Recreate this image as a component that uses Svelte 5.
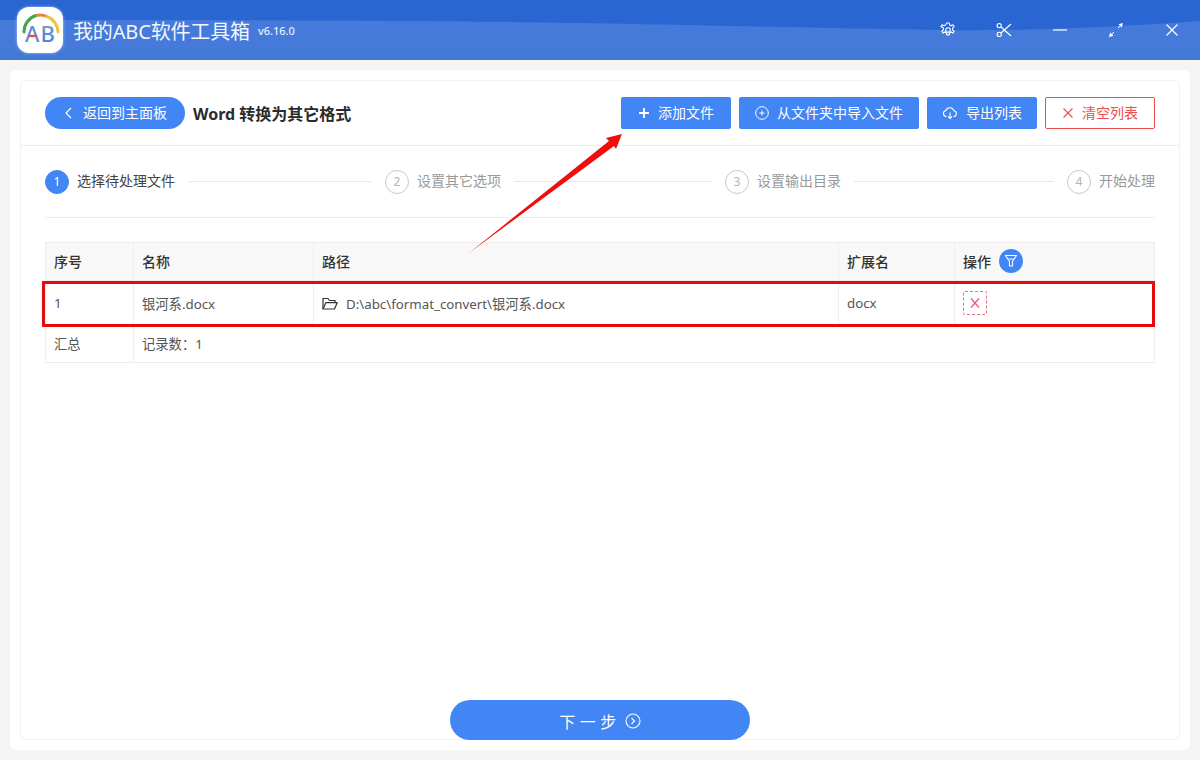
<script>
  const steps = [
    { n: 1, label: '选择待处理文件', active: true },
    { n: 2, label: '设置其它选项' },
    { n: 3, label: '设置输出目录' },
    { n: 4, label: '开始处理' }
  ];
</script>

<div class="app">
  <header class="top">
    <svg class="wave" viewBox="0 0 1200 60" preserveAspectRatio="none" aria-hidden="true">
      <rect width="1200" height="60" fill="#2a66d1" />
      <path d="M0 20 C150 20 300 20 420 21 C640 23 800 28 940 30 C1030 31 1120 27 1200 21 L1200 60 L0 60 Z" fill="#457ada" />
      <rect y="50" width="1200" height="10" fill="#4279d6" />
    </svg>
    <div class="logo">
      <svg viewBox="0 0 46 46" width="46" height="46" aria-hidden="true">
        <defs>
          <linearGradient id="bfill" x1="0" y1="0" x2="0" y2="1">
            <stop offset="0" stop-color="#e3b84a" />
            <stop offset="0.4" stop-color="#5a8fe0" />
            <stop offset="1" stop-color="#4a7fe0" />
          </linearGradient>
        </defs>
        <path d="M7 25 A17 17 0 0 1 19 8.500" fill="none" stroke="#3fa652" stroke-width="3" stroke-linecap="round" />
        <path d="M19 8.500 A17 17 0 0 1 30 9.500" fill="none" stroke="#d98a3a" stroke-width="3" />
        <path d="M30 9.500 A17 17 0 0 1 41 25" fill="none" stroke="#efc23a" stroke-width="3" stroke-linecap="round" />
        <text x="8" y="35" class="logo-a">A</text>
        <path d="M11.500 29h8" stroke="#e8524a" stroke-width="2.400" />
        <text x="23.500" y="35" class="logo-b">B</text>
      </svg>
    </div>
    <span class="app-name">我的ABC软件工具箱</span>
    <span class="version">v6.16.0</span>
    <div class="win-icons">
      <svg viewBox="0 0 16 16" width="16" height="16" aria-hidden="true"><path d="M6.800 1h2.400l.4 2 1.500.7 1.800-1 1.200 1.900-1.500 1.300v1.900l1.500 1.300-1.200 2-1.800-1-1.500.8-.4 2H6.800l-.4-2-1.500-.8-1.800 1-1.200-2 1.500-1.300V6L.9 4.600l1.200-1.900 1.800 1 1.500-.7z" fill="none" stroke="#fff" stroke-width="1.100" stroke-linejoin="round" /><circle cx="8" cy="8" r="2.300" fill="none" stroke="#fff" stroke-width="1.100" /></svg>
      <svg viewBox="0 0 16 16" width="16" height="16" aria-hidden="true"><circle cx="3.200" cy="3.600" r="2.100" fill="none" stroke="#fff" stroke-width="1.100" /><circle cx="3.200" cy="12.400" r="2.100" fill="none" stroke="#fff" stroke-width="1.100" /><path d="M5 5l10 9M5 11L15 2" stroke="#fff" stroke-width="1.100" fill="none" /></svg>
      <svg viewBox="0 0 16 16" width="16" height="16" aria-hidden="true"><path d="M1 8h14" stroke="#cfe2ff" stroke-width="1.600" /></svg>
      <svg viewBox="0 0 16 16" width="16" height="16" aria-hidden="true"><path d="M15 1l-4.600 1.200 3.400 3.400zM1 15l4.600-1.200-3.400-3.400z" fill="#fff" /><path d="M12 4l-2 2M4 12l2-2" stroke="#fff" stroke-width="1" /></svg>
      <svg viewBox="0 0 16 16" width="16" height="16" aria-hidden="true"><path d="M2.500 2.500l11 11M13.500 2.500l-11 11" stroke="#fff" stroke-width="1.200" /></svg>
    </div>
  </header>

  <main class="shell">
    <section class="card">
      <div class="toolbar">
        <button class="back">
          <svg viewBox="0 0 12 12" width="12" height="12" aria-hidden="true"><path d="M8 1L3 6l5 5" fill="none" stroke="#fff" stroke-width="1.200" /></svg>
          <span class="lbl">返回到主面板</span>
        </button>
        <h1>Word 转换为其它格式</h1>
        <div class="actions">
          <button class="btn add">
            <svg viewBox="0 0 12 12" width="12" height="12" aria-hidden="true"><path d="M6 1v10M1 6h10" stroke="#fff" stroke-width="1.800" /></svg>
            <span class="lbl">添加文件</span>
          </button>
          <button class="btn import">
            <svg viewBox="0 0 14 14" width="14" height="14" aria-hidden="true"><circle cx="7" cy="7" r="6.300" fill="none" stroke="#fff" stroke-width="1" /><path d="M7 4.500v5M4.500 7h5" stroke="#fff" stroke-width="1" /></svg>
            <span class="lbl">从文件夹中导入文件</span>
          </button>
          <button class="btn export">
            <svg viewBox="0 0 16 14" width="16" height="14" aria-hidden="true"><path d="M4.500 10.500H4A3 3 0 0 1 3.800 4.600 4.300 4.300 0 0 1 12 4.800a2.900 2.900 0 0 1 0 5.700h-.5" fill="none" stroke="#fff" stroke-width="1.100" /><path d="M8 6.500v6M6 10.500l2 2 2-2" fill="none" stroke="#fff" stroke-width="1.100" /></svg>
            <span class="lbl">导出列表</span>
          </button>
          <button class="btn clear">
            <svg viewBox="0 0 12 12" width="12" height="12" aria-hidden="true"><path d="M1.500 1.500l9 9M10.500 1.500l-9 9" stroke="#ee4d4d" stroke-width="1.100" /></svg>
            <span class="lbl">清空列表</span>
          </button>
        </div>
      </div>

      <div class="content">
        <ol class="steps">
          {#each steps as s, i}
            {#if i > 0}<li class="line" aria-hidden="true"></li>{/if}
            <li class="step" class:active={s.active}>
              <span class="num">{s.n}</span>
              <span class="step-label">{s.label}</span>
            </li>
          {/each}
        </ol>

        <table>
          <colgroup>
            <col style="width:88px" /><col style="width:180px" /><col style="width:525px" /><col style="width:116px" /><col />
          </colgroup>
          <thead>
            <tr>
              <th>序号</th><th>名称</th><th>路径</th><th>扩展名</th>
              <th>
                <span class="op">操作
                  <span class="filter">
                    <svg viewBox="0 0 14 14" width="14" height="14" aria-hidden="true"><path d="M1.500 1.500h11L8.500 7.500v4.500h-3V7.500z" fill="none" stroke="#fff" stroke-width="1.100" stroke-linejoin="round" /><path d="M4.500 5h5" stroke="#fff" stroke-width="1" /></svg>
                  </span>
                </span>
              </th>
            </tr>
          </thead>
          <tbody>
            <tr class="row">
              <td>1</td>
              <td>银河系.docx</td>
              <td>
                <span class="path">
                  <svg viewBox="0 0 16 13" width="16" height="13" aria-hidden="true"><path d="M1 12V1.500h5l1.500 2H13v2.200" fill="none" stroke="#333" stroke-width="1.200" /><path d="M1 12l2.800-6.300H15.200L12.500 12z" fill="none" stroke="#333" stroke-width="1.200" stroke-linejoin="round" /></svg>
                  D:\abc\format_convert\银河系.docx
                </span>
              </td>
              <td>docx</td>
              <td>
                <span class="del">
                  <svg viewBox="0 0 12 12" width="12" height="12" aria-hidden="true"><path d="M2 1.500l8 9M10 1.500l-8 9" stroke="#e8596e" stroke-width="1.200" /></svg>
                </span>
              </td>
            </tr>
            <tr class="sum">
              <td>汇总</td>
              <td colspan="4">记录数：1</td>
            </tr>
          </tbody>
        </table>

        <div class="highlight" aria-hidden="true"></div>
        <svg class="arrow" viewBox="0 0 170 140" width="170" height="140" aria-hidden="true">
          <path d="M1 135 L141 23 L138 20 L154 16 L148 31 L146 28 Z" fill="#f00d0d" />
        </svg>

        <div class="foot">
          <button class="next">
            <span class="next-lbl">下一步</span>
            <svg viewBox="0 0 16 16" width="16" height="16" aria-hidden="true"><circle cx="8" cy="8" r="7" fill="none" stroke="#fff" stroke-width="1.100" /><path d="M6.500 5l3 3-3 3" fill="none" stroke="#fff" stroke-width="1.100" /></svg>
          </button>
        </div>
      </div>
    </section>
  </main>
</div>

<style>
  :global(body) {
    margin: 0;
    background: #f5f5f5;
  }
  .app {
    width: 1200px;
    height: 760px;
    display: flex;
    flex-direction: column;
    overflow: hidden;
    font-family: "Noto Sans", "Noto Sans CJK SC", sans-serif;
    color: #333;
    font-size: 14px;
  }
  button {
    font-family: inherit;
    border: none;
    cursor: pointer;
  }
  .top {
    position: relative;
    height: 60px;
    flex: none;
    display: flex;
    align-items: center;
    padding: 0 17px;
    box-sizing: border-box;
    color: #fff;
  }
  .wave {
    position: absolute;
    inset: 0;
    width: 100%;
    height: 100%;
  }
  .logo {
    position: relative;
    width: 46px;
    height: 46px;
    background: #fff;
    border-radius: 12px;
    margin-top: -1px;
    box-shadow: 0 0 3px rgba(255, 255, 255, 0.6);
  }
  .logo svg {
    display: block;
  }
  .logo-a {
    font: 500 22px "Noto Sans", sans-serif;
    fill: #5b8fd6;
  }
  .logo-b {
    font: 500 22px "Noto Sans", sans-serif;
    fill: url(#bfill);
  }
  .app-name {
    position: relative;
    margin-left: 10px;
    font-size: 20px;
    letter-spacing: -0.150px;
    color: #f2f6fd;
  }
  .version {
    position: relative;
    margin-left: 8px;
    font-size: 11px;
    font-weight: 500;
    color: #e6edfa;
  }
  .win-icons {
    position: relative;
    margin-left: auto;
    display: flex;
    gap: 40px;
    align-items: center;
    padding-right: 3px;
  }
  .win-icons svg {
    display: block;
  }
  .shell {
    flex: 1;
    min-height: 0;
    margin: 10px;
    padding: 10px;
    background: #fff;
    border-radius: 6px;
    display: flex;
  }
  .card {
    flex: 1;
    border: 1px solid #f2f2f2;
    border-radius: 6px;
    display: flex;
    flex-direction: column;
    min-width: 0;
  }
  .toolbar {
    height: 65px;
    flex: none;
    box-sizing: border-box;
    border-bottom: 1px solid #eeeeee;
    display: flex;
    align-items: center;
    padding: 0 24px;
  }
  .back {
    width: 140px;
    height: 32px;
    border-radius: 16px;
    background: #4285f4;
    color: #fff;
    font-size: 14px;
    display: flex;
    align-items: center;
    justify-content: center;
    gap: 8px;
    padding: 0;
  }
  h1 {
    margin: 0 0 0 8px;
    font-size: 16px;
    font-weight: 700;
    color: #2b2b2b;
  }
  .actions {
    margin-left: auto;
    display: flex;
    gap: 8px;
  }
  .btn {
    height: 32px;
    border-radius: 2px;
    background: #4285f4;
    color: #fff;
    font-size: 14px;
    display: flex;
    align-items: center;
    justify-content: center;
    gap: 8px;
    padding: 0;
  }
  .lbl {
    line-height: 32px;
    height: 32px;
  }
  .add { width: 110px; }
  .import { width: 180px; }
  .export { width: 110px; }
  .clear {
    width: 110px;
    background: #fff;
    border: 1px solid #ee4d4d;
    color: #ee4d4d;
    box-sizing: border-box;
  }
  .clear .lbl {
    line-height: 30px;
    height: 30px;
  }
  .content {
    position: relative;
    flex: 1;
    padding: 0 24px;
    display: flex;
    flex-direction: column;
    min-height: 0;
  }
  .steps {
    list-style: none;
    margin: 0;
    padding: 0;
    height: 72px;
    flex: none;
    box-sizing: border-box;
    border-bottom: 1px solid #eeeeee;
    display: flex;
    align-items: center;
    gap: 13px;
  }
  .step {
    display: flex;
    align-items: center;
    gap: 8px;
    color: #9a9a9a;
    white-space: nowrap;
  }
  .step.active {
    color: #444;
  }
  .step-label {
    margin-top: -4px;
  }
  .num {
    width: 24px;
    height: 24px;
    box-sizing: border-box;
    border: 1px solid #c8c8c8;
    border-radius: 50%;
    display: flex;
    align-items: center;
    justify-content: center;
    font-size: 12px;
    color: #b5b5b5;
  }
  .active .num {
    background: #4285f4;
    border-color: #4285f4;
    color: #fff;
  }
  .line {
    height: 1px;
    background: #e8e8e8;
  }
  .line:nth-child(2) { flex: 184 1 0; }
  .line:nth-child(4) { flex: 198 1 0; }
  .line:nth-child(6) { flex: 200 1 0; }
  table {
    margin-top: 24px;
    width: 1110px;
    border-collapse: collapse;
    table-layout: fixed;
    font-size: 13.300px;
  }
  th {
    height: 35px;
    background: #f8f8f8;
    border: 1px solid #eeeeee;
    border-bottom: none;
    text-align: left;
    padding: 0 8px 2px 8px;
    font-size: 14px;
    font-weight: 500;
    color: #333;
  }
  td {
    border: 1px solid #eeeeee;
    padding: 0 8px;
    color: #555;
  }
  .row td {
    height: 42px;
    padding-top: 1px;
  }
  .sum td {
    height: 36px;
    padding-bottom: 1px;
  }
  .op {
    display: flex;
    align-items: center;
    gap: 8px;
  }
  .filter {
    width: 24px;
    height: 24px;
    border-radius: 50%;
    background: #4285f4;
    display: flex;
    align-items: center;
    justify-content: center;
  }
  .path {
    display: flex;
    align-items: center;
    gap: 8px;
  }
  .del {
    width: 24px;
    height: 24px;
    box-sizing: border-box;
    border: 1px dashed #e0718a;
    border-radius: 2px;
    display: flex;
    align-items: center;
    justify-content: center;
  }
  .highlight {
    position: absolute;
    left: 21px;
    top: 135px;
    width: 1113px;
    height: 46px;
    box-sizing: border-box;
    border: 3px solid #e60b0b;
    pointer-events: none;
  }
  .arrow {
    position: absolute;
    left: 447px;
    top: -28px;
    pointer-events: none;
  }
  .foot {
    margin-top: auto;
    margin-bottom: -1px;
    display: flex;
    justify-content: center;
  }
  .next {
    width: 300px;
    height: 40px;
    border-radius: 20px;
    background: #4285f4;
    color: #fff;
    font-size: 16px;
    display: flex;
    align-items: center;
    justify-content: center;
    gap: 4px;
    padding: 2px 0 0 0;
  }
  .next-lbl {
    letter-spacing: 4.500px;
  }
</style>
